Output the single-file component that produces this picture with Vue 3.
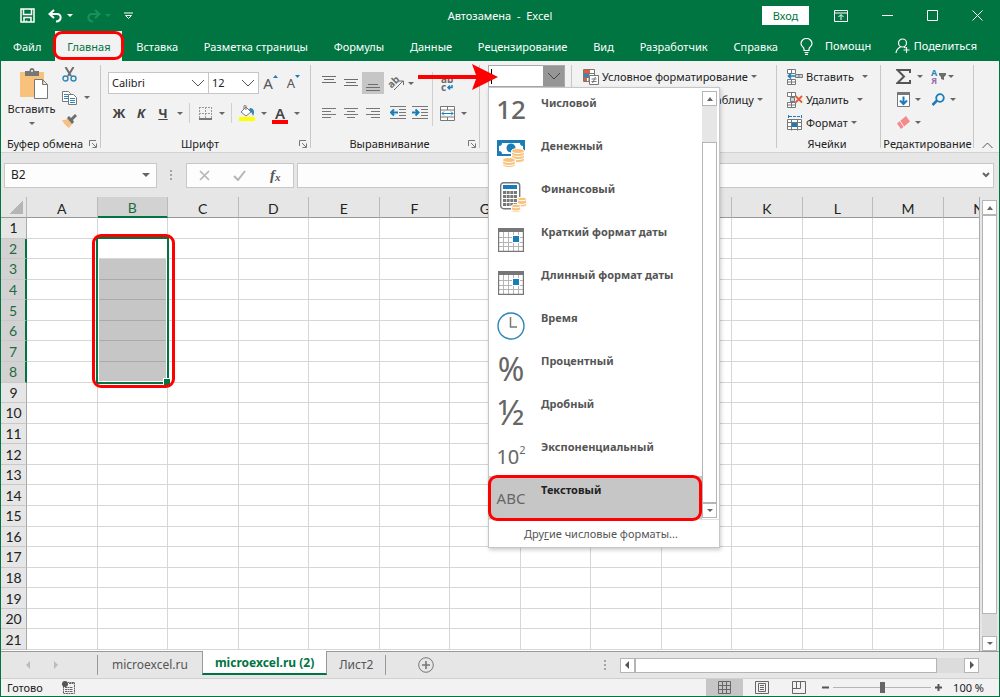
<template>
  <div class="window">
    <header class="titlebar">
      <div class="quick">
        <button aria-label="Сохранить">
          <svg width="15" height="15" viewBox="0 0 15 15" fill="none" stroke="#fff" stroke-width="1.5">
            <path d="M1 1h13v13H1zM3.5 1v5.500h8V1M4 14v-4.500h7V14M6.500 12.500v1.500" />
          </svg>
        </button>
        <button class="undo" aria-label="Отменить">
          <svg width="15" height="14" viewBox="0 0 15 14" fill="none" stroke="#fff" stroke-width="2">
            <path d="M6 1L1.500 5L6 9M2 5h7c5 0 5 7-1 7.500" />
          </svg>
          <i class="caret white"></i>
        </button>
        <button class="redo" aria-label="Повторить">
          <svg width="15" height="14" viewBox="0 0 15 14" fill="none" stroke="#15925f" stroke-width="2">
            <path d="M9 1l4.500 4L9 9M13 5H6c-5 0-5 7 1 7.500" />
          </svg>
          <i class="caret dim"></i>
        </button>
        <button aria-label="Настройка панели">
          <svg width="9" height="8" viewBox="0 0 9 8" fill="none" stroke="#fff">
            <path d="M0 1h9M1.500 3.500h6L4.500 6.500z" />
          </svg>
        </button>
      </div>
      <h1>Автозамена&nbsp; -&nbsp; Excel</h1>
      <div class="controls">
        <button class="login">Вход</button>
        <button aria-label="Параметры ленты">
          <svg width="14" height="12" viewBox="0 0 14 12" fill="none" stroke="#fff">
            <path d="M.5.5h13v11H.5zM.5 3h13M7 10V5M4.500 7L7 4.500L9.500 7" />
          </svg>
        </button>
        <button aria-label="Свернуть">
          <svg width="11" height="11" viewBox="0 0 11 11" stroke="#fff"><path d="M0 5.500h11" /></svg>
        </button>
        <button aria-label="Развернуть">
          <svg width="11" height="11" viewBox="0 0 11 11" fill="none" stroke="#fff"><path d="M.5.5h10v10H.5z" /></svg>
        </button>
        <button aria-label="Закрыть">
          <svg width="11" height="11" viewBox="0 0 11 11" stroke="#fff"><path d="M.5.5l10 10M10.500.5l-10 10" /></svg>
        </button>
      </div>
    </header>

    <nav class="tabs">
      <div class="tab-list">
        <button
          v-for="tab in tabs"
          :key="tab"
          :class="{ active: tab === activeTab }"
          @click="activeTab = tab"
        >{{ tab }}</button>
      </div>
      <button class="help">
        <svg width="13" height="17" viewBox="0 0 13 17" fill="none" stroke="#fff" stroke-width="1.200">
          <path d="M4 12.500V11C4 9 1 8.500 1 5.500a5.500 5 0 0 1 11 0C12 8.500 9 9 9 11v1.500zM4.500 14.500h4M5 16.300h3" />
        </svg>
        Помощн
      </button>
      <button class="share">
        <svg width="16" height="16" viewBox="0 0 16 16" fill="none" stroke="#fff" stroke-width="1.200">
          <circle cx="7.500" cy="5" r="4" />
          <path d="M1 15c.5-3.500 2-5 4.500-6M9 9l1.500 1M11.500 9v6M8.500 12h6" />
        </svg>
        Поделиться
      </button>
    </nav>

    <section class="ribbon">
      <div class="group clipboard">
        <div class="body">
          <button class="paste">
            <svg width="28" height="31" viewBox="0 0 28 31">
              <path fill="#f9c27c" d="M0 4h24v25H0z" />
              <path fill="#777" d="M5 3h4.500a2.500 3 0 0 1 5 0H19v5H5z" />
              <circle cx="12" cy="3" r="1" fill="#f2f2f2" />
              <path fill="#fff" stroke="#777" d="M14.500 11.500h8l5 5v14h-13zM22.500 11.500v5h5" />
            </svg>
            <span>Вставить</span>
            <i class="caret"></i>
          </button>
          <div class="clip-tools">
            <button aria-label="Вырезать">
              <svg width="15" height="15" viewBox="0 0 15 15" fill="none">
                <path d="M3.500 0L9 9M11.500 0L6 9" stroke="#6d6d6d" stroke-width="2" />
                <circle cx="3.500" cy="11.500" r="2.500" stroke="#2f86b8" stroke-width="1.400" />
                <circle cx="11.500" cy="11.500" r="2.500" stroke="#2f86b8" stroke-width="1.400" />
              </svg>
            </button>
            <button aria-label="Копировать">
              <svg width="15" height="14" viewBox="0 0 15 14" fill="#fff" stroke="#777">
                <path d="M.5.5h6l2 2v8h-8z" />
                <path d="M2 3.500h4M2 5.500h4M2 7.500h4" stroke="#2f86b8" />
                <path d="M6.500 3.500h5l3 3v7h-8z" />
                <path d="M8 7.500h5M8 9.500h5M8 11.500h5" stroke="#2f86b8" />
              </svg>
              <i class="caret"></i>
            </button>
            <button aria-label="Формат по образцу">
              <svg width="15" height="14" viewBox="0 0 15 14">
                <path fill="#f5c083" d="M0 6l3 0 4-2 4 5-4 5c-3-2-5-4-7-8z" />
                <path fill="#6d6d6d" d="M5 4l2-2 2 2 4-4 2 2-4 4 1 2-2 2z" />
              </svg>
            </button>
          </div>
        </div>
        <footer><span>Буфер обмена</span><svg class="launcher" viewBox="0 0 8 8"><path d="M.5 6V.5H7M3 3l4 4M7.500 3.500v4h-4" /></svg></footer>
      </div>

      <div class="group font">
        <div class="body rows">
          <div class="row">
            <span class="select name">
              <select aria-label="Шрифт"><option>Calibri</option></select>
              <svg viewBox="0 0 14 8"><path d="M1 1l6 6l6-6" /></svg>
            </span>
            <span class="select size">
              <select aria-label="Размер"><option>12</option></select>
              <svg viewBox="0 0 14 8"><path d="M1 1l6 6l6-6" /></svg>
            </span>
            <button class="grow">А<svg width="5" height="3" viewBox="0 0 5 3"><path d="M0 3L2.500 0L5 3z" /></svg></button>
            <button class="grow less">А<svg width="5" height="3" viewBox="0 0 5 3"><path d="M0 0L2.500 3L5 0z" /></svg></button>
          </div>
          <div class="row">
            <button class="tool"><b>Ж</b></button>
            <button class="tool"><b><em>К</em></b></button>
            <button class="tool"><b><u>Ч</u></b></button>
            <button class="drop" aria-label="Подчеркивание"><i class="caret"></i></button>
            <span class="bar"></span>
            <button class="tool" aria-label="Границы">
              <svg width="13" height="13" viewBox="0 0 13 13" fill="none" stroke="#999">
                <path d="M.5 0v12M12.500 0v12M0 .5h13M6.500 0v12M0 6.500h13" stroke-dasharray="2 1" />
                <path d="M0 12h13" stroke="#777" stroke-width="2" />
              </svg>
            </button>
            <button class="drop" aria-label="Виды границ"><i class="caret"></i></button>
            <span class="bar"></span>
            <button class="tool" aria-label="Цвет заливки">
              <svg width="16" height="16" viewBox="0 0 16 16">
                <path fill="#fff" stroke="#777" d="M2 7l5-5l5 5l-5 4zM7 5V1c0-1-2-1-2 0v3" />
                <path fill="#2f86b8" d="M11 3c4 0 5 4 3 8c-1-2-1-4-4-6z" />
                <path fill="#ff0" d="M0 12h16v4H0z" />
              </svg>
            </button>
            <button class="drop" aria-label="Выбор заливки"><i class="caret"></i></button>
            <button class="tool color">А</button>
            <button class="drop" aria-label="Выбор цвета"><i class="caret"></i></button>
          </div>
        </div>
        <footer><span>Шрифт</span><svg class="launcher" viewBox="0 0 8 8"><path d="M.5 6V.5H7M3 3l4 4M7.500 3.500v4h-4" /></svg></footer>
      </div>

      <div class="group align">
        <div class="body">
          <div class="rows left">
            <div class="row">
              <button
                v-for="(d, i) in verticalAlign"
                :key="d"
                class="tool"
                :class="{ pressed: i === 2 }"
                aria-label="Выравнивание по вертикали"
              >
                <svg width="14" height="18" viewBox="0 0 14 18" stroke="#6d6d6d"><path :d="d" /></svg>
              </button>
              <button class="orient" aria-label="Ориентация">
                <svg width="18" height="18" viewBox="0 0 18 18">
                  <text x="1" y="12" transform="rotate(-45 6 9)" font-size="10" font-weight="700" fill="#6d6d6d">ab</text>
                  <path d="M7 16L16 7M12 7h4.500v4" fill="none" stroke="#6d6d6d" />
                </svg>
              </button>
              <button class="drop" aria-label="Поворот"><i class="caret"></i></button>
            </div>
            <div class="row">
              <button v-for="d in horizontalAlign" :key="d" class="tool" aria-label="Выравнивание по горизонтали">
                <svg width="14" height="13" viewBox="0 0 14 13" stroke="#777"><path :d="d" /></svg>
              </button>
              <button class="tool indent" aria-label="Уменьшить отступ">
                <svg width="16" height="14" viewBox="0 0 16 14" stroke="#777">
                  <path d="M0 .5h16M9 3.500h7M9 6.500h7M9 9.500h7M0 12.500h16" />
                  <path d="M1 6.500h7M4 3.500l-3 3l3 3" fill="none" stroke="#1a7db8" stroke-width="2" />
                </svg>
              </button>
              <button class="tool" aria-label="Увеличить отступ">
                <svg width="16" height="14" viewBox="0 0 16 14" stroke="#777">
                  <path d="M0 .5h16M9 3.500h7M9 6.500h7M9 9.500h7M0 12.500h16" />
                  <path d="M0 6.500h6M3.500 3.500l3 3l-3 3" fill="none" stroke="#1a7db8" stroke-width="2" />
                </svg>
              </button>
            </div>
          </div>
          <span class="bar tall"></span>
          <div class="rows">
            <div class="row">
              <button class="tool" aria-label="Перенести текст">
                <svg width="16" height="20" viewBox="0 0 16 20">
                  <text x="2" y="10" font-size="10" font-weight="700" fill="#6d6d6d">ab</text>
                  <text x="2" y="18" font-size="10" font-weight="700" fill="#6d6d6d">c</text>
                  <path d="M13 12v2.500H9M11 12.500l-2 2l2 2" fill="none" stroke="#1a7db8" stroke-width="1.500" />
                </svg>
              </button>
            </div>
            <div class="row">
              <button class="tool" aria-label="Объединить">
                <svg width="15" height="15" viewBox="0 0 15 15" fill="none" stroke="#777">
                  <path fill="#fff" d="M.5.5h14v14H.5z" />
                  <path d="M.5 4h14M.5 11h14M7.500.5V4M7.500 11v3.500" />
                  <path d="M2 7.500h11M4 5.500l-2 2l2 2M11 5.500l2 2l-2 2" stroke="#1a7db8" />
                </svg>
              </button>
              <button class="drop" aria-label="Варианты объединения"><i class="caret"></i></button>
            </div>
          </div>
        </div>
        <footer><span>Выравнивание</span><svg class="launcher" viewBox="0 0 8 8"><path d="M.5 6V.5H7M3 3l4 4M7.500 3.500v4h-4" /></svg></footer>
      </div>

      <div class="group number">
        <div class="combo">
          <input v-model="format" type="text" aria-label="Числовой формат" />
          <button aria-label="Список форматов" @click="menuOpen = !menuOpen">
            <svg width="14" height="8" viewBox="0 0 14 8" fill="none" stroke="#444"><path d="M1 1l6 6l6-6" /></svg>
          </button>
          <span class="cursor"></span>
          <svg class="pointer" width="80" height="26" viewBox="0 0 80 26" fill="#f00">
            <path d="M0 11h58L54 0L80 13L54 26l4-11H0z" />
          </svg>

          <div v-if="menuOpen" class="menu">
            <div class="menu-main">
              <ul>
                <li v-for="item in formats" :key="item.label">
                  <button :class="{ chosen: item.icon === 'abc' }">
                    <span class="pic" :class="item.icon">
                      <svg v-if="item.icon === 'money'" width="28" height="28" viewBox="0 0 28 28">
                        <path fill="#1a7db8" d="M0 0h28v16H0z" />
                        <path fill="#fff" d="M5 3h18c0 2 1 3 3 3v5c-2 0-3 1-3 3H5c0-2-1-3-3-3V6c2 0 3-1 3-3z" />
                        <circle cx="14" cy="8" r="4.500" fill="#1a7db8" />
                        <g fill="#f9c27c" stroke="#fff">
                          <path d="M14.500 17v3a6.500 2.500 0 0 0 13 0v-3z" />
                          <path d="M14.500 14v3a6.500 2.500 0 0 0 13 0v-3z" />
                          <path d="M14.500 11v3a6.500 2.500 0 0 0 13 0v-3z" />
                          <ellipse cx="21" cy="11" rx="6.500" ry="2.500" />
                          <path d="M5.500 23v2a6.500 2.500 0 0 0 13 0v-2z" />
                          <path d="M5.500 20v3a6.500 2.500 0 0 0 13 0v-3z" />
                          <ellipse cx="12" cy="20" rx="6.500" ry="2.500" />
                        </g>
                      </svg>
                      <svg v-else-if="item.icon === 'finance'" class="calc" width="27" height="31" viewBox="0 0 27 31">
                        <rect x=".7" y=".7" width="19" height="26" rx="3" fill="#fff" stroke="#777" stroke-width="1.400" />
                        <path fill="#1a7db8" d="M3 3h14v4H3z" />
                        <path d="M3 10.500h14M3 14.500h14M3 18.500h14M3 22.500h14" stroke="#777" stroke-width="3" stroke-dasharray="3 .66" />
                        <g fill="#f9c27c" stroke="#fff">
                          <path d="M17.500 21v2a4.500 2 0 0 0 9 0v-2z" />
                          <path d="M17.500 17v3.500a4.500 2 0 0 0 9 0V17z" />
                          <ellipse cx="22" cy="17" rx="4.500" ry="1.800" />
                          <path d="M11.500 27v1.500a4.500 2 0 0 0 9 0V27z" />
                          <path d="M11.500 24v3a4.500 2 0 0 0 9 0v-3z" />
                          <ellipse cx="16" cy="24" rx="4.500" ry="1.800" />
                        </g>
                      </svg>
                      <svg v-else-if="item.icon === 'date'" width="26" height="24" viewBox="0 0 26 24" fill="none">
                        <path d="M5.500 4v19M10.500 4v19M15.500 4v19M20.500 4v19M1 9.500h24M1 14.500h24M1 18.500h24" stroke="#b5b5b5" />
                        <path d="M.6 1v22.400h24.800V1" stroke="#777" stroke-width="1.200" />
                        <path fill="#777" d="M0 0h26v4H0z" />
                        <path fill="#1a7db8" stroke="#fff" d="M14.500 7.500h7v7h-7z" />
                      </svg>
                      <svg v-else-if="item.icon === 'time'" width="28" height="28" viewBox="0 0 28 28" fill="none">
                        <circle cx="14" cy="14" r="13" fill="#fff" stroke="#2f86b8" stroke-width="1.400" />
                        <path d="M13.500 5v10H20" stroke="#777" stroke-width="1.500" />
                      </svg>
                      <template v-else>{{ item.sign }}<sup v-if="item.icon === 'power'">2</sup></template>
                    </span>
                    <strong>{{ item.label }}</strong>
                  </button>
                </li>
              </ul>
              <div class="scroll menu-scroll">
                <button aria-label="Вверх"><i class="caret up"></i></button>
                <span class="track"></span>
                <span class="thumb"></span>
                <button aria-label="Вниз"><i class="caret"></i></button>
              </div>
            </div>
            <button class="more">Дру<u>г</u>ие числовые форматы...</button>
          </div>
        </div>
      </div>

      <div class="group styles">
        <button class="line">
          <svg width="16" height="16" viewBox="0 0 16 16" fill="#fff" stroke="#777">
            <path d="M.5.500h11v12H.5zM.5 4.500h11M.5 8.500h11M6 .5v12" />
            <path d="M1 1h6v3H1zM1 9h3v3H1z" fill="#e8593a" stroke="none" />
            <path d="M1 5h5v3H1z" fill="#2f86b8" stroke="none" />
            <path d="M6.500 6.500h9v9h-9zM8.500 10h5M8.500 12.500h5M12.500 8l-3 6" />
          </svg>
          Условное форматирование
          <i class="caret"></i>
        </button>
        <button class="line">
          <svg width="16" height="16" viewBox="0 0 16 16" fill="#fff" stroke="#777"><path d="M.5.500h14v12H.5zM.5 4.500h14M.5 8.500h14M5 .5v12M10 .5v12" /></svg>
          Форматировать как таблицу
          <i class="caret"></i>
        </button>
      </div>

      <div class="group cells">
        <div class="body lines">
          <button class="line">
            <svg width="16" height="16" viewBox="0 0 16 16" fill="#fff" stroke="#777">
              <path d="M.5.500h8v4h-8zM4.500.500v4M.5 10.500h8v5h-8zM4.500 10.500v5M.5 13h8" />
              <path d="M8.500 5.500h7v3h-7zM12 5.500v3" fill="#bdd7e8" />
              <path d="M8 7H1.500M4 4.500L1.500 7L4 9.500" fill="none" stroke="#1a7db8" stroke-width="1.700" />
            </svg>
            Вставить
            <i class="caret far"></i>
          </button>
          <button class="line">
            <svg width="16" height="16" viewBox="0 0 16 16" fill="#fff" stroke="#777">
              <path d="M.5.500h8v4h-8zM4.500.500v4M.5 10.500h8v5h-8zM4.500 10.500v5M.5 13h8" />
              <path d="M3.500 5.500h4v4h-4z" fill="#bdd7e8" />
              <path d="M8.500 4l6.500 6.500M15 4L8.500 10.500" stroke="#e8593a" stroke-width="1.800" />
            </svg>
            Удалить
            <i class="caret far"></i>
          </button>
          <button class="line">
            <svg width="16" height="16" viewBox="0 0 16 16" fill="#fff" stroke="#777">
              <path d="M.5 4.500h14v10H.5zM.5 7.500h14M.5 11.500h14M4.500 4.500v11M10.500 4.500v11" />
              <path d="M5 8h5v4H5z" fill="#1a7db8" stroke="none" />
              <path d="M1.500 0v3M14.500 0v3M2 1.500h12" stroke="#1a7db8" stroke-dasharray="3 1" />
            </svg>
            Формат
            <i class="caret"></i>
          </button>
        </div>
        <footer><span>Ячейки</span></footer>
      </div>

      <div class="group editing">
        <div class="body lines">
          <div class="line">
            <button aria-label="Автосумма">
              <svg width="15" height="15" viewBox="0 0 15 15" fill="none" stroke="#555" stroke-width="2">
                <path d="M14 4V1H1.500L8 7.500L1.500 14H14v-3" />
              </svg>
              <i class="caret wide"></i>
            </button>
            <button class="sort" aria-label="Сортировка и фильтр">
              <span><b>А</b><b>Я</b></span>
              <svg width="7" height="7" viewBox="0 0 7 7"><path fill="#6d6d6d" d="M0 0h7v2L5 4v3L2 6V4L0 2z" /></svg>
              <i class="caret"></i>
            </button>
          </div>
          <div class="line">
            <button aria-label="Заполнить">
              <svg width="15" height="16" viewBox="0 0 15 16" fill="#fff" stroke="#777">
                <path d="M1.500.5h12v14h-12z" />
                <path d="M1 0h13v3H1z" fill="#777" stroke="none" />
                <path d="M7.500 4.500V12M4 8.500l3.500 3.500L11 8.500" fill="none" stroke="#1a7db8" stroke-width="2" />
              </svg>
              <i class="caret"></i>
            </button>
            <button aria-label="Найти">
              <svg width="15" height="14" viewBox="0 0 15 14" fill="none" stroke="#1a7db8">
                <circle cx="9" cy="5" r="3.800" stroke-width="1.800" />
                <path d="M6 7.500L1.500 12" stroke-width="2.500" />
              </svg>
              <i class="caret"></i>
            </button>
          </div>
          <div class="line">
            <button aria-label="Очистить">
              <svg width="15" height="14" viewBox="0 0 15 14">
                <path fill="#f58a8c" d="M10 0l4 5.500L5 13L1 7.500z" />
                <path stroke="#f2f2f2" d="M4 5l4 6" />
              </svg>
              <i class="caret"></i>
            </button>
          </div>
        </div>
        <footer><span>Редактирование</span></footer>
      </div>

      <button class="collapse" aria-label="Свернуть ленту">
        <svg width="11" height="7" viewBox="0 0 11 7" fill="none" stroke="#555"><path d="M.5 6l5-5l5 5" /></svg>
      </button>
    </section>

    <section class="formula">
      <div class="namebox">
        <input value="B2" aria-label="Имя" />
        <i class="caret big"></i>
      </div>
      <span class="dots"></span>
      <div class="fx">
        <button aria-label="Отмена"><svg width="11" height="11" viewBox="0 0 11 11" stroke="#b5b5b5" stroke-width="1.600"><path d="M1 1l9 9M10 1l-9 9" /></svg></button>
        <button aria-label="Ввод"><svg width="13" height="11" viewBox="0 0 13 11" fill="none" stroke="#b5b5b5" stroke-width="2"><path d="M1 6l4 4l7-9" /></svg></button>
        <button class="fn">f<small>x</small></button>
      </div>
      <div class="entry">
        <input aria-label="Строка формул" />
        <svg width="8" height="6" viewBox="0 0 8 6" fill="none" stroke="#666" stroke-width="2"><path d="M1 1l3 3l3-3" /></svg>
      </div>
    </section>

    <main class="sheet">
      <div class="viewport">
        <table>
          <thead>
            <tr>
              <th class="corner"></th>
              <th v-for="col in columns" :key="col" :class="{ on: col === 'B' }">{{ col }}</th>
            </tr>
          </thead>
          <tbody>
            <tr v-for="row in 21" :key="row">
              <th :class="{ on: row >= 2 && row <= 8 }">{{ row }}</th>
              <td v-for="col in columns" :key="col" :class="{ filled: col === 'B' && row > 2 && row <= 8, first: col === 'B' && row === 2 }">
                <template v-if="col === 'B' && row === 2">
                  <span class="selection"></span>
                  <span class="mark"></span>
                </template>
              </td>
            </tr>
          </tbody>
        </table>
      </div>
      <div class="scroll sheet-scroll">
        <button aria-label="Вверх"><i class="caret up"></i></button>
        <span class="thumb"></span>
        <span class="track"></span>
        <button aria-label="Вниз"><i class="caret"></i></button>
      </div>
    </main>

    <nav class="sheets">
      <div class="arrows">
        <svg width="4" height="8" viewBox="0 0 4 8" fill="#bbb"><path d="M4 0v8L0 4z" /></svg>
        <svg width="4" height="8" viewBox="0 0 4 8" fill="#bbb"><path d="M0 0v8l4-4z" /></svg>
      </div>
      <button
        v-for="name in sheets"
        :key="name"
        :class="{ active: name === activeSheet }"
        @click="activeSheet = name"
      >{{ name }}</button>
      <button class="add" aria-label="Новый лист">
        <svg width="16" height="16" viewBox="0 0 16 16" fill="none" stroke="#777"><circle cx="8" cy="8" r="7.300" /><path d="M8 4v8M4 8h8" stroke-width="1.600" /></svg>
      </button>
      <span class="dots"></span>
      <div class="hscroll">
        <button aria-label="Влево"><svg width="4" height="8" viewBox="0 0 4 8" fill="#555"><path d="M4 0v8L0 4z" /></svg></button>
        <span class="thumb"></span>
        <span class="track"></span>
        <button aria-label="Вправо"><svg width="4" height="8" viewBox="0 0 4 8" fill="#555"><path d="M0 0v8l4-4z" /></svg></button>
      </div>
    </nav>

    <footer class="status">
      <span>Готово</span>
      <svg class="macro" width="13" height="13" viewBox="0 0 13 13" fill="none" stroke="#666">
        <path d="M1.500 5v7.500h11v-11H6M7 2.500h5M3 6.500h8M3 8.500h8M3 10.500h8" stroke-dasharray="2 .5" />
        <circle cx="3" cy="3" r="3" fill="#555" stroke="none" />
      </svg>
      <div class="views">
        <button class="on" aria-label="Обычный"><svg width="13" height="13" viewBox="0 0 13 13" fill="none" stroke="#666"><path d="M.5.500h12v12H.5zM.5 4.500h12M.5 8.500h12M4.500.5v12M8.500.5v12" /></svg></button>
        <button aria-label="Разметка страницы"><svg width="14" height="13" viewBox="0 0 14 13" fill="none" stroke="#666"><path d="M.5.500h13v12H.5zM3.500 2.500h7v8h-7zM5 4.500h4M5 6.500h4M5 8.500h4" /></svg></button>
        <button aria-label="Страничный"><svg width="14" height="13" viewBox="0 0 14 13" fill="none" stroke="#666"><path d="M.5.500h13v12H.5zM4.500.5v7M8.500.5v7M.5 7.500h8" /></svg></button>
      </div>
      <div class="zoom">
        <button aria-label="Уменьшить"><svg width="7" height="7" viewBox="0 0 7 7" stroke="#555" stroke-width="2"><path d="M0 3.500h7" /></svg></button>
        <input v-model="zoom" type="range" min="0" max="200" aria-label="Масштаб" />
        <button aria-label="Увеличить"><svg width="7" height="7" viewBox="0 0 7 7" stroke="#555" stroke-width="2"><path d="M0 3.500h7M3.500 0v7" /></svg></button>
        <span class="percent">{{ zoom }} %</span>
      </div>
    </footer>
  </div>
</template>

<script setup>
import { ref } from "vue";

const tabs = [
  "Файл",
  "Главная",
  "Вставка",
  "Разметка страницы",
  "Формулы",
  "Данные",
  "Рецензирование",
  "Вид",
  "Разработчик",
  "Справка",
];
const activeTab = ref("Главная");

const sheets = ["microexcel.ru", "microexcel.ru (2)", "Лист2"];
const activeSheet = ref("microexcel.ru (2)");

const columns = "ABCDEFGHIJKLMN".split("");

const format = ref("");
const menuOpen = ref(true);
const zoom = ref(100);

const formats = [
  { label: "Числовой", icon: "digits", sign: "12" },
  { label: "Денежный", icon: "money" },
  { label: "Финансовый", icon: "finance" },
  { label: "Краткий формат даты", icon: "date" },
  { label: "Длинный формат даты", icon: "date" },
  { label: "Время", icon: "time" },
  { label: "Процентный", icon: "percent-sign", sign: "%" },
  { label: "Дробный", icon: "half", sign: "½" },
  { label: "Экспоненциальный", icon: "power", sign: "10" },
  { label: "Текстовый", icon: "abc", sign: "ABC" },
];

// top, middle, bottom
const verticalAlign = [
  "M0 2.500h14M2 5.500h10M0 8.500h14",
  "M0 5.500h14M2 8.500h10M0 11.500h14",
  "M2 10.500h10M0 13.500h14M0 16.500h14",
];

// left, center, right
const horizontalAlign = [
  "M0 1.500h14M0 4.500h9M0 7.500h14M0 10.500h9",
  "M0 1.500h14M3 4.500h8M0 7.500h14M3 10.500h8",
  "M0 1.500h14M5 4.500h9M0 7.500h14M5 10.500h9",
];
</script>

<style>
body {
  margin: 0;
}
</style>

<style scoped>
* {
  box-sizing: border-box;
}

.window {
  display: flex;
  flex-direction: column;
  min-height: 100vh;
  border: 1px solid #007541;
  border-top: 0;
  background: #e6e6e6;
  color: #222;
  font-family: "Noto Sans", "Open Sans", sans-serif;
  font-size: 11px;
  line-height: 16px;
}

button,
input,
select {
  margin: 0;
  padding: 0;
  border: 0;
  background: none;
  color: inherit;
  font: inherit;
  min-width: 0;
}

button {
  display: flex;
  align-items: center;
  justify-content: center;
  white-space: nowrap;
}

svg {
  flex: none;
}

.caret {
  flex: none;
  border: 3px solid transparent;
  border-top-color: #666;
  border-bottom: 0;
}

.caret.up {
  border-top: 0;
  border-bottom: 4px solid #666;
}

.caret.white {
  border-top-color: #fff;
}

.caret.dim {
  border-top-color: #15925f;
}

.caret.big {
  border-width: 4px 4px 0;
}

/* Title bar */
.titlebar {
  display: grid;
  grid-template-columns: 1fr auto 1fr;
  align-items: center;
  height: 31px;
  background: #007541;
  color: #fff;
}

.titlebar h1 {
  margin: 0;
  font-size: 11px;
  font-weight: 400;
}

.quick {
  display: flex;
  align-items: center;
  gap: 13px;
  padding-left: 19px;
}

.quick button {
  gap: 4px;
}

.controls {
  display: flex;
  align-items: center;
  justify-content: flex-end;
  gap: 34px;
  padding-right: 16px;
}

.controls .login {
  width: 47px;
  height: 19px;
  margin-right: -9px;
  background: #fff;
  color: #007541;
}

/* Tabs */
.tabs {
  display: flex;
  align-items: stretch;
  height: 30px;
  background: #007541;
  color: #fff;
}

.tab-list {
  display: flex;
  justify-content: space-between;
  flex: 0 1 789px;
}

.tab-list button {
  position: relative;
  padding: 1px 12px 0;
}

.tab-list .active {
  background: #f2f2f2;
  color: #007541;
}

.tab-list .active::after {
  content: "";
  position: absolute;
  inset: 0 -2px 1px;
  border: 3px solid #f00;
  border-radius: 9px;
}

.help {
  gap: 12px;
  margin-left: 10px;
}

.share {
  gap: 3px;
  margin-left: auto;
  padding-right: 22px;
}

/* Ribbon */
.ribbon {
  display: grid;
  grid-template-columns: 100px 210px 169px 92px 205px 104px 93px 1fr;
  height: 92px;
  border-bottom: 1px solid #d2d2d2;
  background: #f2f2f2;
}

.group {
  position: relative;
  display: flex;
  flex-direction: column;
  padding-top: 4px;
}

.group::after {
  content: "";
  position: absolute;
  top: 4px;
  right: 0;
  bottom: 4px;
  border-right: 1px solid #c8c8c8;
}

.group footer {
  display: flex;
  align-items: center;
  height: 16px;
  padding-right: 4px;
  white-space: nowrap;
}

.group footer span {
  flex: 1;
  text-align: center;
}

.launcher {
  width: 8px;
  height: 8px;
  fill: none;
  stroke: #777;
}

.body {
  display: flex;
  flex: 1;
}

.rows {
  display: flex;
  flex-direction: column;
  padding-top: 7px;
  gap: 8px;
}

.row {
  display: flex;
  align-items: center;
  height: 22px;
}

.tool {
  width: 22px;
  height: 22px;
  font-size: 13px;
  color: #444;
}

.tool.pressed {
  background: #c6c6c6;
}

.drop {
  width: 11px;
  height: 22px;
}

.bar {
  height: 20px;
  margin: 0 4px;
  border-left: 1px solid #d0d0d0;
}

.bar.tall {
  height: 54px;
  margin: 7px 3px 0 1px;
}

.clipboard .paste {
  flex-direction: column;
  justify-content: flex-start;
  width: 61px;
  padding: 3px 0 0;
}

.paste svg {
  margin-left: 4px;
}

.paste span {
  margin: 2px 0 5px;
}

.clip-tools {
  display: flex;
  flex-direction: column;
  gap: 8px;
  padding-top: 2px;
}

.clip-tools button {
  justify-content: flex-start;
  gap: 7px;
  height: 15px;
}

.font .rows {
  padding-left: 7px;
}

.select {
  position: relative;
  height: 22px;
  border: 1px solid #c6c6c6;
  background: #fff;
}

.select.name {
  width: 101px;
}

.select.size {
  width: 51px;
  margin-left: -1px;
}

.select select {
  width: 100%;
  height: 100%;
  padding-left: 3px;
  appearance: none;
}

.select svg {
  position: absolute;
  top: 6px;
  right: 3px;
  width: 14px;
  height: 8px;
  fill: none;
  stroke: #555;
  pointer-events: none;
}

.grow {
  align-items: flex-start;
  width: 23px;
  font-size: 15px;
  color: #555;
}

.grow.less {
  font-size: 13px;
}

.grow svg {
  fill: #1a7db8;
}

.tool.color {
  align-self: flex-end;
  width: 16px;
  height: 18px;
  margin: 0 3px;
  border-bottom: 4px solid #f00;
  font-size: 15px;
  font-weight: 600;
}

.align .body {
  padding-left: 7px;
}

.align .left {
  width: 113px;
}

.orient {
  width: 18px;
  margin-left: 3px;
}

.indent {
  margin-left: 3px;
}

/* Number format box and its list */
.combo {
  position: relative;
  display: flex;
  height: 22px;
  margin: 0 7px 0 8px;
  border: 1px solid #aaa;
  background: #fff;
}

.combo > input {
  flex: 1;
  padding-left: 4px;
}

.combo > button {
  width: 21px;
  background: #969696;
}

.cursor {
  position: absolute;
  top: 3px;
  left: 2px;
  height: 15px;
  border-left: 1px solid #000;
}

.pointer {
  position: absolute;
  top: -2px;
  left: -71px;
  z-index: 2;
}

.menu {
  position: absolute;
  top: 21px;
  left: -1px;
  z-index: 5;
  width: 232px;
  border: 1px solid #c6c6c6;
  background: #fff;
  box-shadow: 1px 2px 4px rgba(0, 0, 0, 0.2);
}

.menu-main {
  display: flex;
  padding: 1px 2px 0 0;
  border-bottom: 1px solid #e1e1e1;
}

.menu ul {
  flex: 1;
  margin: 0;
  padding: 0;
  list-style: none;
}

.menu li button {
  position: relative;
  align-items: flex-start;
  justify-content: flex-start;
  width: 100%;
  height: 43px;
  padding: 6px 0 0 8px;
  color: #555;
}

.menu strong {
  padding-left: 16px;
  font-weight: 700;
}

.menu .chosen {
  background: #c6c6c6;
}

.menu .chosen strong {
  color: #222;
}

.menu .chosen::after {
  content: "";
  position: absolute;
  inset: -1px 0 -2px -1px;
  border: 3px solid #f00;
  border-radius: 9px;
}

.pic {
  display: flex;
  align-items: center;
  justify-content: center;
  flex: none;
  width: 28px;
  height: 32px;
  color: #666;
  white-space: nowrap;
}

.pic.digits {
  height: 28px;
  font-size: 26px;
  font-weight: 500;
}

.pic.percent-sign {
  font-size: 32px;
}

.pic.half {
  font-size: 34px;
}

.pic.power {
  height: 36px;
  font-size: 20px;
}

.pic sup {
  align-self: flex-start;
  padding-top: 3px;
  font-size: 11px;
  line-height: 16px;
}

.pic.abc {
  font-size: 15px;
}

.calc {
  margin-left: 4px;
}

.scroll {
  display: flex;
  flex-direction: column;
  width: 15px;
}

.scroll button {
  height: 15px;
  border: 1px solid #b5b5b5;
  background: #fff;
}

.thumb {
  border: 1px solid #b5b5b5;
  background: #fff;
}

.track {
  background: #dcdcdc;
}

.menu-scroll {
  padding: 2px 0 1px;
}

.menu-scroll .track {
  height: 36px;
  background: #e6e6e6;
}

.menu-scroll .thumb {
  flex: 1;
}

.more {
  width: 100%;
  height: 27px;
  padding-right: 6px;
  color: #555;
}

.styles {
  padding-left: 11px;
}

.line {
  display: flex;
  align-items: center;
  justify-content: flex-start;
  gap: 3px;
  height: 23px;
  white-space: nowrap;
}

.lines {
  flex-direction: column;
}

.cells .lines {
  padding-left: 10px;
}

.caret.far {
  margin-left: 5px;
}

.editing .lines {
  padding-left: 15px;
}

.editing .line {
  gap: 10px;
}

.editing .line button {
  gap: 4px;
}

.editing .wide {
  margin-left: 2px;
  margin-right: -2px;
}

.editing .line .sort {
  gap: 2px;
}

.sort span {
  display: flex;
  flex-direction: column;
  color: #2f86b8;
  font-size: 9px;
  line-height: 8px;
}

.sort b + b {
  color: #9b6fae;
}

.editing footer {
  padding: 0;
}

.collapse {
  align-self: end;
  justify-self: start;
  margin: 0 0 3px 8px;
}

/* Formula bar */
.formula {
  display: flex;
  align-items: center;
  height: 44px;
  padding: 0 5px 0 3px;
}

.formula > div {
  display: flex;
  align-items: center;
  height: 25px;
  border: 1px solid #c8c8c8;
  background: #fdfdfd;
}

.formula .namebox {
  width: 153px;
  padding: 0 6px;
}

.namebox input {
  flex: 1;
  font-size: 12px;
}

.dots {
  height: 10px;
  border-left: 2px dotted #a5a5a5;
}

.formula .dots {
  margin: 0 14px 0 13px;
}

.fx {
  width: 108px;
  margin-right: 3px;
}

.fx button {
  flex: 1;
}

.fx .fn {
  font-family: "Liberation Serif", serif;
  font-size: 15px;
  font-style: italic;
  font-weight: 700;
  color: #555;
}

.fn small {
  padding-top: 4px;
  font-size: 11px;
}

.entry {
  flex: 1;
  padding: 0 3px;
}

.entry input {
  flex: 1;
}

/* Sheet */
.sheet {
  display: flex;
  flex: 1;
}

.viewport {
  display: flex;
  flex: 1;
  overflow: hidden;
  border-right: 1px solid #aaa;
}

table {
  display: flex;
  flex-direction: column;
  flex: none;
  width: calc((100% - 26px) * 28 / 27 + 26px);
  font-family: Lato, sans-serif;
  font-size: 14px;
  color: #222;
}

tr {
  display: grid;
  grid-template-columns: 26px repeat(14, 1fr);
}

tbody {
  display: grid;
  grid-template-rows: repeat(21, minmax(20px, 1fr));
  flex: 1;
  padding-bottom: 1px;
  background: #fff;
}

th,
td {
  padding: 0;
  border: solid #d6d6d6;
  border-width: 0 1px 1px 0;
}

th {
  display: flex;
  align-items: center;
  justify-content: center;
  padding-top: 1px;
  background: #e6e6e6;
  font-weight: 400;
  line-height: 18px;
}

thead th {
  height: 21px;
  padding-top: 3px;
  border-right-color: #bbb;
  border-bottom-color: #999;
}

thead .on {
  border-bottom: 2px solid #007541;
}

tbody th {
  border-color: #c8c8c8;
  border-right-color: #aaa;
}

tbody .on {
  border-right: 2px solid #007541;
}

th.on {
  background: #d2d2d2;
  color: #1c6b43;
}

th.corner {
  background: linear-gradient(135deg, #e6e6e6 50%, #b5b5b5 50%);
  background-size: 13px 13px;
  background-repeat: no-repeat;
  background-position: 9px 4px;
}

.filled {
  border-bottom-color: #aaa;
  background: #c6c6c6;
}

.first {
  position: relative;
}

.selection {
  position: absolute;
  top: -2px;
  left: -2px;
  z-index: 1;
  width: calc(100% + 4px);
  height: calc(700% + 10px);
  border: 2px solid #007541;
  box-shadow: inset 0 0 0 1px #fff;
}

.selection::after {
  content: "";
  position: absolute;
  right: -3px;
  bottom: -3px;
  width: 6px;
  height: 6px;
  background: #007541;
  outline: 1px solid #fff;
}

.mark {
  position: absolute;
  top: -5px;
  left: -6px;
  z-index: 2;
  width: calc(100% + 14px);
  height: calc(700% + 17px);
  border: 3px solid #f00;
  border-radius: 9px;
}

.sheet-scroll {
  margin: 3px 2px 0;
}

.sheet-scroll .thumb {
  flex: 1;
}

.sheet-scroll .track {
  height: 22px;
}

/* Sheet tabs */
.sheets {
  display: flex;
  align-items: center;
  height: 27px;
  border-top: 1px solid #999;
  font-size: 12px;
}

.arrows {
  display: flex;
  gap: 24px;
  width: 96px;
  padding-left: 25px;
}

.sheets > button {
  height: 20px;
  padding: 0 14px;
  color: #555;
}

.sheets .arrows + button {
  border-left: 1px solid #999;
}

.sheets > button:nth-of-type(3) {
  padding: 0 12px;
  border-right: 1px solid #999;
}

.sheets > .active {
  align-self: flex-start;
  height: 24px;
  margin-top: -1px;
  padding: 2px 12px 0;
  border: solid #999;
  border-width: 0 1px;
  border-bottom: 2px solid #007541;
  background: #fff;
  color: #007541;
  font-weight: 700;
}

.sheets > .add {
  padding: 0 32px;
}

.sheets .dots {
  margin-left: auto;
}

.hscroll {
  display: flex;
  width: 36%;
  height: 15px;
  margin: 0 20px 0 14px;
}

.hscroll button {
  width: 15px;
  border: 1px solid #b5b5b5;
  background: #fff;
}

.hscroll .thumb {
  flex: 1;
}

.hscroll .track {
  width: 27px;
}

/* Status bar */
.status {
  display: flex;
  align-items: center;
  height: 18px;
  border-top: 1px solid #d0d0d0;
  background: #f2f2f2;
}

.status > span {
  padding-left: 6px;
}

.macro {
  margin-left: 19px;
}

.views {
  display: flex;
  align-self: stretch;
  margin-left: auto;
}

.views button {
  width: 37px;
}

.views .on {
  background: #c6c6c6;
}

.zoom {
  display: flex;
  align-items: center;
  gap: 4px;
  padding: 0 15px 0 5px;
}

.zoom .percent {
  padding-left: 7px;
}

.zoom input {
  width: 98px;
  height: 14px;
  appearance: none;
  background: linear-gradient(#b5b5b5, #b5b5b5) center / 100% 1px no-repeat;
}

.zoom input::-webkit-slider-thumb {
  width: 5px;
  height: 11px;
  appearance: none;
  background: #666;
}
</style>
